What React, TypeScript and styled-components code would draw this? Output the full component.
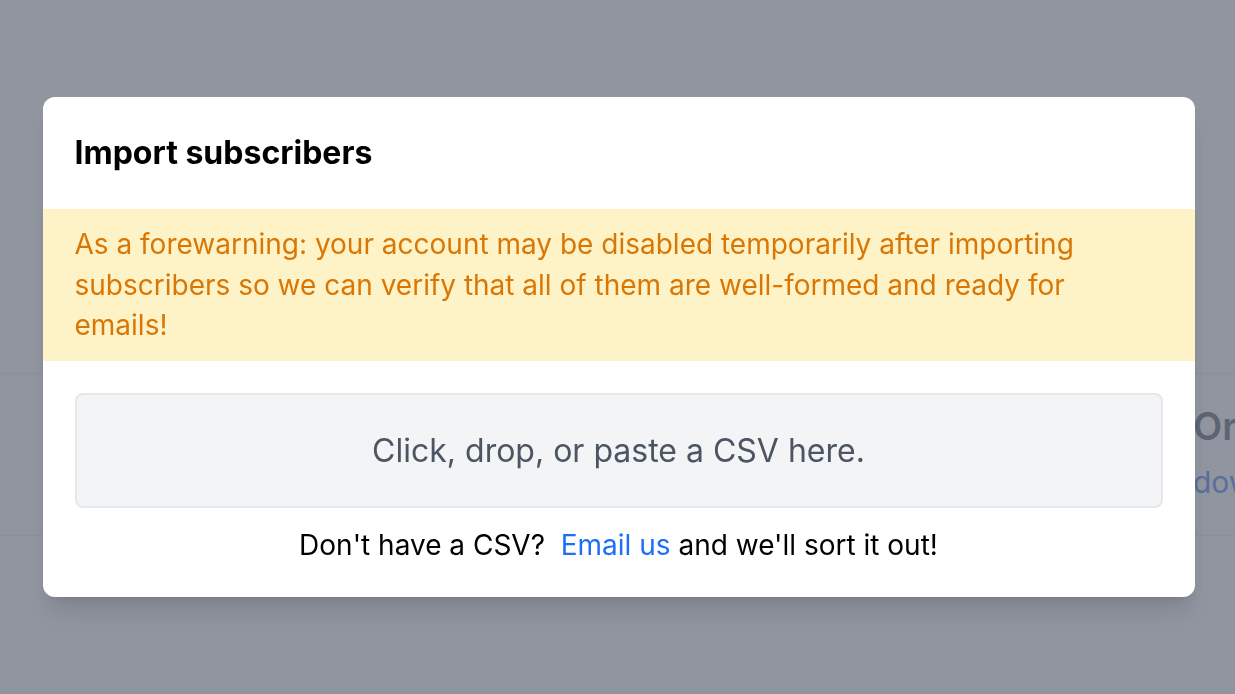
import React from "react";
import styled, { createGlobalStyle } from "styled-components";

const GlobalStyle = createGlobalStyle`
  html, body {
    margin: 0;
    padding: 0;
    background: #ffffff;
    font-family: Inter, "Noto Sans", "Liberation Sans", sans-serif;
    -webkit-font-smoothing: antialiased;
  }
  * { box-sizing: border-box; }
`;

const Page = styled.div`
  width: 1235px;
  height: 694px;
  overflow: hidden;
  padding-top: 373px;
`;

const BackSection = styled.section`
  height: 163px;
  border-top: 1px solid #e5e7eb;
  border-bottom: 1px solid #e5e7eb;
  display: grid;
  grid-template-columns: 1193px 1fr;
`;

const BackColumn = styled.div`
  padding-top: 30px;
  display: flex;
  flex-direction: column;
  gap: 16px;
  white-space: nowrap;
`;

const BackHeading = styled.div`
  font-size: 38px;
  line-height: 44px;
  font-weight: 600;
  color: #374151;
`;

const BackLink = styled.a`
  font-size: 30px;
  line-height: 36px;
  color: #2563eb;
  text-decoration: none;
`;

const Overlay = styled.div`
  position: fixed;
  inset: 0;
  padding-left: 2px;
  background: rgba(107, 114, 128, 0.75);
  display: flex;
  align-items: center;
  justify-content: center;
`;

const Modal = styled.div`
  width: 1152px;
  height: 500px;
  background: #ffffff;
  border-radius: 12px;
  overflow: hidden;
  box-shadow: 0 20px 25px -5px rgba(0, 0, 0, 0.1), 0 8px 10px -6px rgba(0, 0, 0, 0.1);
  display: flex;
  flex-direction: column;
`;

const Header = styled.div`
  padding: 32px;
`;

const Title = styled.h2`
  margin: 0;
  font-size: 32px;
  line-height: 48px;
  font-weight: 700;
  color: #000000;
  font-variation-settings: "opsz" 20;
`;

const Warning = styled.div`
  background: #fef3c7;
  color: #d97706;
  padding: 15px 72px 15.5px 32px;
  font-size: 28px;
  line-height: 40.5px;
`;

const Body = styled.div`
  padding: 32px;
  display: flex;
  flex-direction: column;
  gap: 17px;
`;

const DropZone = styled.div`
  height: 115px;
  background: #f3f4f6;
  border: 2px solid #e5e7eb;
  border-radius: 8px;
  display: flex;
  align-items: center;
  justify-content: center;
  color: #4b5563;
  font-size: 32px;
  cursor: pointer;
`;

const Footer = styled.p`
  margin: 0;
  text-align: center;
  font-size: 28px;
  line-height: 40px;
  color: #000000;
  white-space: pre;
`;

const Link = styled.a`
  color: #1e6ff5;
  text-decoration: none;
`;

export default function App() {
  return (
    <>
      <GlobalStyle />
      <Page>
        <BackSection>
          <div />
          <BackColumn>
            <BackHeading>Or</BackHeading>
            <BackLink href="#">download a template</BackLink>
          </BackColumn>
        </BackSection>
      </Page>
      <Overlay>
        <Modal>
          <Header>
            <Title>Import subscribers</Title>
          </Header>
          <Warning>
            As a forewarning: your account may be disabled temporarily after importing subscribers so we can
            verify that all of them are well-formed and ready for emails!
          </Warning>
          <Body>
            <DropZone>Click, drop, or paste a CSV here.</DropZone>
            <Footer>
              {"Don't have a CSV?  "}
              <Link href="#">Email us</Link>
              {" and we'll sort it out!"}
            </Footer>
          </Body>
        </Modal>
      </Overlay>
    </>
  );
}
